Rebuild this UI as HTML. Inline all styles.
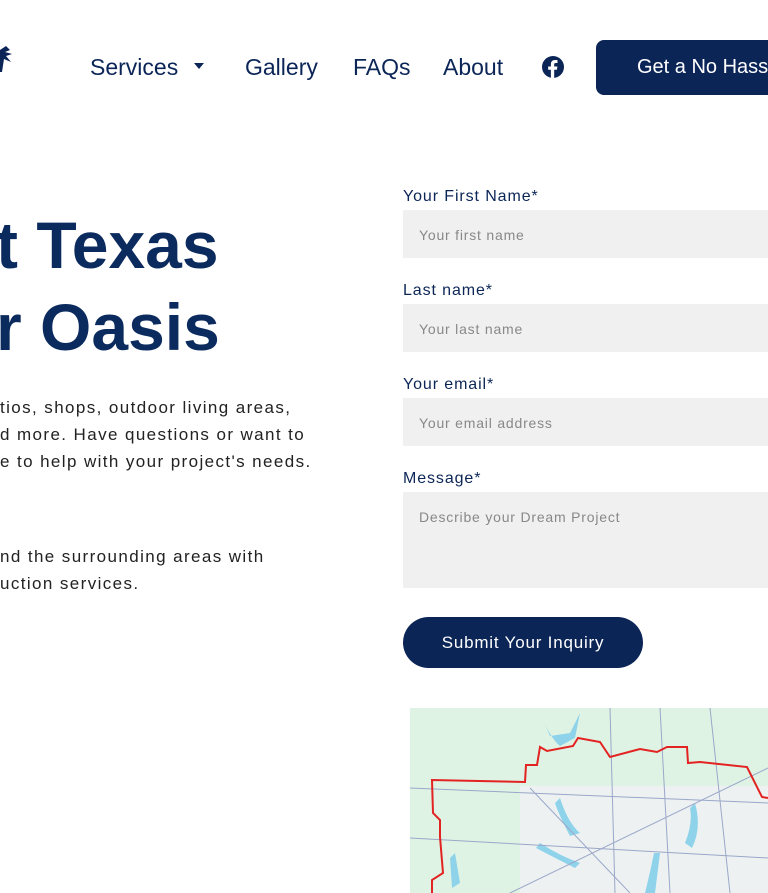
<!DOCTYPE html>
<html><head><style>
body{margin:0;width:768px;height:893px;overflow:hidden;background:#fff;font-family:"Liberation Sans",sans-serif;color:#0b2557;position:relative}
.a{position:absolute;white-space:nowrap}
.nav{font-size:23px;color:#0b2557;top:54px}
h1{position:absolute;margin:0;font-size:66px;font-weight:700;color:#0b2a5e;line-height:82px;white-space:nowrap}
.p{position:absolute;font-size:17px;color:#222;line-height:27px;white-space:nowrap;letter-spacing:1.4px}
.lab{position:absolute;left:403px;font-size:16px;color:#0b2557;letter-spacing:0.9px}
.in{position:absolute;left:403px;width:365px;height:48px;background:#f0f0f0;color:#888;font-size:14px;box-sizing:border-box;padding:17px 16px;letter-spacing:0.8px}
</style></head><body>
<svg class="a" style="left:0;top:46px" width="14" height="28" viewBox="0 0 14 28"><path d="M0 4 L6 0 L10 4 L5 6 L12 8 L6 10 L11 16 L4 13 L2 26 L0 26Z" fill="#0b2557"/></svg>
<div class="a nav" style="left:90px">Services</div>
<div class="a" style="left:194px;top:63px;width:0;height:0;border-left:5px solid transparent;border-right:5px solid transparent;border-top:6px solid #0b2557"></div>
<div class="a nav" style="left:245px">Gallery</div>
<div class="a nav" style="left:353px">FAQs</div>
<div class="a nav" style="left:443px">About</div>
<svg class="a" style="left:542px;top:56px" width="22" height="22" viewBox="0 0 24 24"><circle cx="12" cy="12" r="12" fill="#0b2557"/><path d="M13.3 24V15h3l.5-3.5h-3.5V9.3c0-1 .3-1.7 1.8-1.7h1.8V4.5c-.3 0-1.4-.1-2.7-.1-2.7 0-4.5 1.6-4.5 4.6v2.5h-3V15h3v9z" fill="#fff"/></svg>
<div class="a" style="left:596px;top:40px;width:200px;height:55px;background:#0b2557;border-radius:8px;color:#fff;font-size:20px;line-height:55px;padding-left:41px;box-sizing:border-box">Get a No Hassle</div>
<h1 style="left:-4px;top:204px">t Texas</h1>
<h1 style="left:-4px;top:286px">r Oasis</h1>
<div class="p" style="left:0;top:394px">tios, shops, outdoor living areas,<br>d more. Have questions or want to<br>e to help with your project's needs.</div>
<div class="p" style="left:0;top:543px">nd the surrounding areas with<br>uction services.</div>
<div class="lab" style="top:188px">Your First Name*</div>
<div class="in" style="top:210px">Your first name</div>
<div class="lab" style="top:282px">Last name*</div>
<div class="in" style="top:304px">Your last name</div>
<div class="lab" style="top:376px">Your email*</div>
<div class="in" style="top:398px">Your email address</div>
<div class="lab" style="top:470px">Message*</div>
<div class="in" style="top:492px;height:96px">Describe your Dream Project</div>
<div class="a" style="left:403px;top:617px;width:240px;height:51px;background:#0b2557;border-radius:26px;color:#fff;font-size:17px;line-height:51px;text-align:center;letter-spacing:0.8px">Submit Your Inquiry</div>
<svg class="a" style="left:410px;top:708px" width="358" height="185" viewBox="0 0 358 185">
<rect width="358" height="185" fill="#dff3e4"/>
<rect x="110" y="78" width="248" height="107" fill="#eef1f2"/>
<path d="M130 5 Q140 30 150 38 L165 30 L170 5 L160 25 L140 28Z M150 90 Q158 115 170 125 L160 128 Q148 105 145 95Z M130 135 Q150 148 170 155 L165 160 Q145 150 126 140Z M285 95 Q292 120 282 140 L275 135 Q283 115 280 100Z M250 145 L245 185 L235 185 Q240 165 244 145Z M45 145 L50 175 L42 180 L40 150Z" fill="#8fd3ea"/>
<g stroke="#9aa7c9" stroke-width="1" fill="none"><path d="M0 80 L358 95 M120 80 L220 185 M200 0 L205 185 M250 0 L260 185 M0 130 L358 150 M100 185 L358 60 M300 0 L320 185"/></g>
<path d="M0 185 L0 185 M22 185 L22 172 L33 165 L30 129 L30 112 L23 105 L22 72 L115 74 L116 57 L127 57 L130 39 L137 43 L163 38 L168 30 L190 34 L200 49 L230 41 L247 44 L257 39 L277 39 L278 55 L290 54 L337 59 L352 89 L358 90" stroke="#e32222" stroke-width="2" fill="none"/>
</svg>
</body></html>
